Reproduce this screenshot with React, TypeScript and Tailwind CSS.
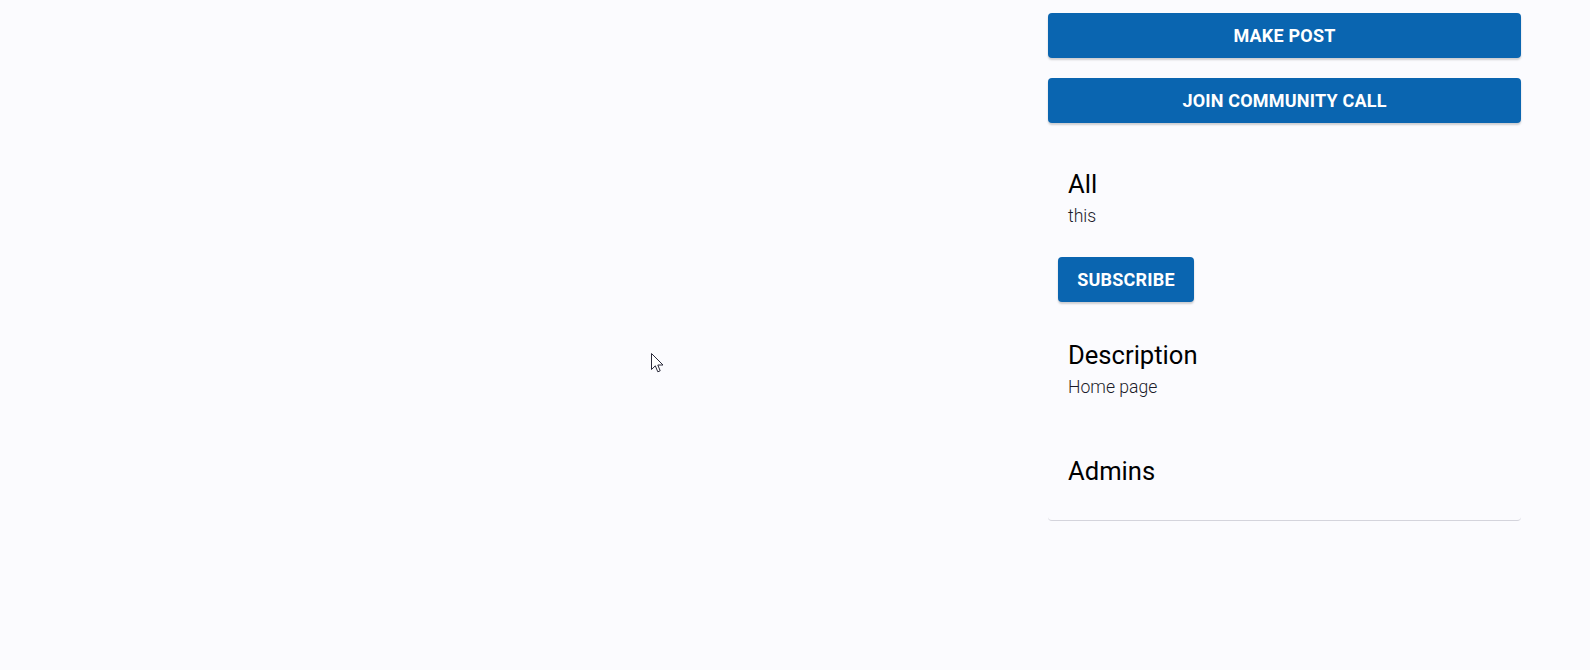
import React from "react";

function BlueButton({ children, className = "" }: { children: React.ReactNode; className?: string }) {
  return (
    <button
      className={
        "h-[45px] rounded-[4px] bg-[#0a65b0] text-white font-bold uppercase text-[18px] tracking-[0.2px] shadow-[0_2px_2px_rgba(0,0,0,0.18)] flex items-center justify-center " +
        className
      }
    >
      {children}
    </button>
  );
}

export default function App() {
  return (
    <div
      className="relative min-h-[670px] w-full bg-[#fbfbfe] text-[#111]"
      style={{ fontFamily: "Roboto, 'Noto Sans', 'Liberation Sans', sans-serif" }}
    >
      <div className="flex">
        <div className="flex-1" />
        <aside className="w-[473px] mr-[69px] pt-[13px] flex flex-col">
          <BlueButton className="w-full">Make Post</BlueButton>
          <BlueButton className="w-full mt-[20px]">Join Community Call</BlueButton>

          <div className="mt-[25px] border-b border-[#d4d4dc] rounded-b-[4px] pb-[33px]">
            <div className="px-[20px] pt-[20px]">
              <h2 className="text-[25.6px] leading-[32px] font-normal text-black">All</h2>
              <p className="mt-[4px] text-[17.6px] leading-[24px] font-light text-[#1b1b2a]">this</p>
            </div>
            <div className="px-[10px] pt-[29px]">
              <BlueButton className="w-[136px]">Subscribe</BlueButton>
            </div>
            <div className="px-[20px] pt-[37px]">
              <h2 className="text-[25.6px] leading-[32px] font-normal text-black">Description</h2>
              <p className="mt-[4px] text-[17.6px] leading-[24px] font-light text-[#1b1b2a]">Home page</p>
            </div>
            <div className="px-[20px] pt-[56px]">
              <h2 className="text-[25.6px] leading-[32px] font-normal text-black">Admins</h2>
            </div>
          </div>
        </aside>
      </div>

      <svg
        className="absolute left-[651px] top-[353px]"
        width="13"
        height="21"
        viewBox="0 0 13 21"
      >
        <path
          d="M0.5 0.5 L0.5 16.5 L4.3 12.8 L6.8 18.8 L9.2 17.8 L6.8 12 L12 12 Z"
          fill="#ffffff"
          stroke="#2a2a3a"
          strokeWidth="1"
          strokeLinejoin="round"
        />
      </svg>
    </div>
  );
}
